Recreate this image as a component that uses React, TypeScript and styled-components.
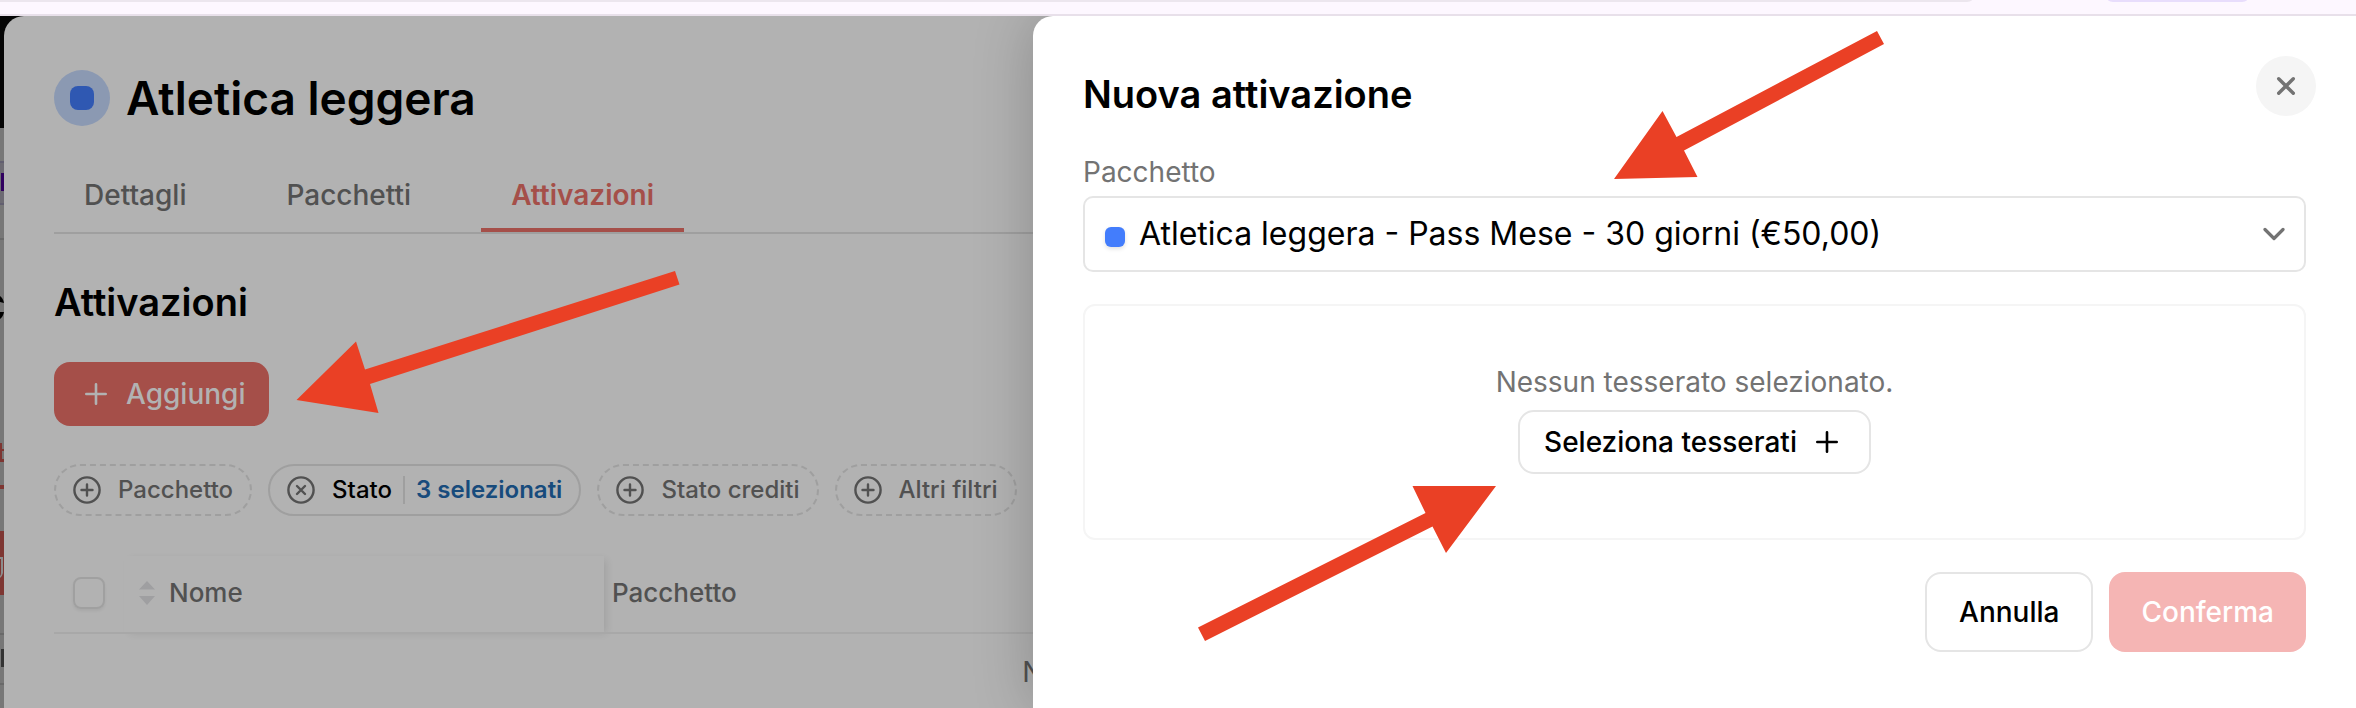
import React from 'react';
import styled, { createGlobalStyle, css } from 'styled-components';

const GlobalStyle = createGlobalStyle`
  *, *::before, *::after { box-sizing: border-box; }
  body { margin: 0; font-family: Inter, "Liberation Sans", sans-serif; color: #000; }
  button, select, input { font: inherit; margin: 0; }
`;

const Page = styled.div`
  min-height: 100vh;
  display: flex;
  flex-direction: column;
  overflow: hidden;
  position: relative;
`;

const BrowserBar = styled.div`
  height: 16px;
  flex: none;
  display: flex;
  gap: 136px;
  background: #fdf7ff;
  border-bottom: 2px solid #e8e0ea;
  position: relative;
  z-index: 2;
`;

const AddressEdge = styled.div`
  flex: 1;
  height: 2px;
  background: #ece6ee;
  border-bottom-right-radius: 8px 2px;
`;

const ChipEdge = styled.div`
  width: 139px;
  height: 2px;
  margin-right: 109px;
  background: #e8ddfc;
  border-radius: 0 0 8px 8px / 0 0 2px 2px;
`;

const Stage = styled.div`
  flex: 1;
  display: grid;
  grid-template-columns: 4px minmax(0, 1fr) min(1323px, 57%);
  background: linear-gradient(#050505 0 112px, #777 112px);
`;

const Backdrop = styled.svg`
  grid-column: 1;
  grid-row: 1;
  width: 4px;
  height: 692px;
`;

const Panel = styled.main`
  grid-column: 2 / -1;
  grid-row: 1;
  min-width: 0;
  padding: 54px 50px 0;
  background: #b2b2b2;
  border-top-left-radius: 20px;
`;

const TitleRow = styled.div`
  display: flex;
  align-items: center;
  gap: 16px;
`;

const Badge = styled.span`
  width: 56px;
  height: 56px;
  border-radius: 50%;
  background: #8b99b2;
  display: grid;
  place-items: center;

  &::before {
    content: "";
    width: 24px;
    height: 24px;
    border-radius: 8px;
    background: #2f58b2;
  }
`;

const Title = styled.h1`
  margin: 0;
  font-size: 46px;
  line-height: 56px;
  font-weight: 600;
`;

const Tabs = styled.nav`
  display: flex;
  gap: 40px;
  margin-top: 28px;
  border-bottom: 2px solid #9f9f9f;
`;

const Tab = styled.a<{ $active?: boolean }>`
  padding: 23px 30px 19px;
  font-size: 28px;
  line-height: 36px;
  font-weight: 500;
  text-decoration: none;
  color: #515151;
  ${(p) =>
    p.$active &&
    css`
      color: #a54f49;
      font-weight: 600;
      padding-bottom: 15px;
      border-bottom: 4px solid #a54f49;
    `}
`;

const Heading = styled.h2`
  margin: 0;
  font-size: 38px;
  line-height: 48px;
  font-weight: 600;
`;

const SectionHeading = styled(Heading)`
  margin-top: 44px;
`;

const Button = styled.button<{ $tone?: 'dim' | 'soft'; $tall?: boolean }>`
  display: inline-flex;
  align-items: center;
  gap: 12px;
  height: ${(p) => (p.$tall ? 80 : 64)}px;
  padding: 0 ${(p) => (p.$tall ? 32 : 24)}px;
  border: 2px solid #e5e5e5;
  border-radius: 16px;
  background: #fff;
  color: #000;
  font-size: 28px;
  line-height: 36px;
  font-weight: 500;
  ${(p) =>
    p.$tone === 'dim' &&
    css`
      background: #a54f49;
      border: 0;
      color: #b2b2b2;
    `}
  ${(p) =>
    p.$tone === 'soft' &&
    css`
      background: #f5b5b4;
      border: 0;
      color: #fff;
    `}
`;

const AddRow = styled.div`
  display: flex;
  margin-top: 36px;
`;

const Filters = styled.div`
  display: flex;
  gap: 16px;
  margin-top: 38px;
`;

const Pill = styled.button<{ $on?: boolean }>`
  display: inline-flex;
  align-items: center;
  flex: none;
  gap: 17px;
  height: 52px;
  padding: 0 17px;
  border: 2px ${(p) => (p.$on ? 'solid' : 'dashed')} #9f9f9f;
  border-radius: 26px;
  background: transparent;
  color: ${(p) => (p.$on ? '#000' : '#515151')};
  font-size: 24px;
  line-height: 32px;
  font-weight: 500;
  white-space: nowrap;

  svg { color: #515151; }
`;

const PillLabel = styled.span`
  display: flex;
  align-items: center;
  gap: 11px;
`;

const PillRule = styled.span`
  width: 2px;
  height: 28px;
  background: #9f9f9f;
`;

const PillValue = styled.span`
  color: #174b7c;
  font-weight: 600;
`;

const Table = styled.table`
  width: 100%;
  margin-top: 40px;
  border-collapse: collapse;
  table-layout: fixed;
`;

const HeadCell = styled.th<{ $w?: number; $sticky?: boolean }>`
  height: 77px;
  width: ${(p) => (p.$w ? `${p.$w}px` : 'auto')};
  padding: 0 8px 3px;
  text-align: left;
  font-size: 26px;
  line-height: 32px;
  font-weight: 500;
  color: #515151;
  border-bottom: 2px solid #a8a8a8;
  box-shadow: ${(p) => (p.$sticky ? '4px 2px 8px -2px rgba(0, 0, 0, 0.1)' : 'none')};
`;

const CheckCell = styled(HeadCell)`
  padding: 0 19px 3px;
`;

const Check = styled.input`
  appearance: none;
  display: block;
  width: 32px;
  height: 32px;
  border: 2px solid #a0a0a0;
  border-radius: 8px;
  box-shadow: 0 2px 3px rgba(0, 0, 0, 0.06);
`;

const Sortable = styled.span`
  display: flex;
  align-items: center;
  gap: 14px;
  padding-left: 7px;
`;

const EmptyCell = styled.td`
  height: 76px;
  text-align: center;
  font-size: 28px;
  line-height: 36px;
  color: #515151;
`;

const Drawer = styled.aside`
  grid-column: 3;
  grid-row: 1;
  position: relative;
  z-index: 1;
  padding: 40px 50px 56px;
  background: #fff;
  border-top-left-radius: 20px;
  box-shadow: 0 0 60px rgba(0, 0, 0, 0.22);
`;

const DrawerHead = styled.header`
  display: flex;
  justify-content: space-between;
  align-items: flex-start;
  margin-right: -10px;

  h2 { padding-top: 14px; }
`;

const Close = styled.button`
  width: 60px;
  height: 60px;
  padding: 0;
  border: 0;
  border-radius: 50%;
  background: #f5f5f5;
  color: #737373;
  display: grid;
  place-items: center;
`;

const Label = styled.label`
  display: block;
  margin-top: 36px;
  padding: 0 0 6px;
  font-size: 28px;
  line-height: 36px;
  color: #737373;
`;

const SelectBox = styled.div`
  display: grid;
  align-items: center;
  grid-template-columns: 56px 1fr 64px;

  > * { grid-row: 1; }
  svg { grid-column: 3; justify-self: center; color: #737373; pointer-events: none; z-index: 1; }
`;

const Swatch = styled.span`
  grid-column: 1;
  width: 20px;
  height: 20px;
  margin: 6px 0 0 22px;
  border-radius: 6px;
  background: #437dfc;
  box-shadow: 0 2px 4px rgba(0, 0, 0, 0.12);
  z-index: 1;
`;

const Select = styled.select`
  grid-column: 1 / -1;
  appearance: none;
  width: 100%;
  height: 76px;
  padding: 0 60px 0 54px;
  border: 2px solid #e5e5e5;
  border-radius: 10px;
  background: #fff;
  color: #000;
  font-size: 32px;
  line-height: 40px;
`;

const Empty = styled.section`
  display: flex;
  flex-direction: column;
  align-items: center;
  margin-top: 32px;
  padding: 58px 24px 64px;
  border: 2px solid #f5f5f5;
  border-radius: 12px;
`;

const EmptyText = styled.p`
  margin: 0 0 10px;
  font-size: 28px;
  line-height: 36px;
  color: #737373;
`;

const Actions = styled.footer`
  display: flex;
  justify-content: flex-end;
  gap: 16px;
  margin-top: 32px;
`;

const Annotations = styled.svg`
  position: absolute;
  top: 0;
  left: 0;
  z-index: 3;
  pointer-events: none;
`;

const Plus = () => (
  <svg width="36" height="36" viewBox="0 0 36 36" fill="none" stroke="currentColor" strokeWidth="2.6" strokeLinecap="round" aria-hidden="true">
    <path d="M18 8.300v19.400M8.300 18h19.400" />
  </svg>
);

const CircleMark = ({ cross }: { cross?: boolean }) => (
  <svg width="28" height="28" viewBox="0 0 28 28" fill="none" stroke="currentColor" strokeWidth="2.4" strokeLinecap="round" aria-hidden="true">
    <circle cx="14" cy="14" r="12.6" />
    <path d={cross ? 'M10 10l8 8M18 10l-8 8' : 'M14 8.5v11M8.5 14h11'} />
  </svg>
);

const SortIcon = () => (
  <svg width="16" height="24" viewBox="0 0 16 24" fill="#9f9fa1" aria-hidden="true">
    <path d="M8 0l8 8.5H0zM8 24l8-9H0z" />
  </svg>
);

export default function App() {
  return (
    <Page>
      <GlobalStyle />
      <BrowserBar>
        <AddressEdge />
        <ChipEdge />
      </BrowserBar>
      <Stage>
        <Backdrop viewBox="0 0 4 692" aria-hidden="true">
          <path fill="#625f70" d="M0 145h4v2H0zM0 187h4v2H0z" />
          <path fill="#6d6b73" d="M0 147h4v40H0z" />
          <path fill="#310060" d="M1 157h3v18H1z" />
          <path fill="#696969" d="M0 222h4v2H0zM0 617h4v2H0zM0 667h4v2H0z" />
          <path fill="#000" d="M0 280q3 2 4 7l-4-1zM0 296h4q-1 5-4 7z" />
          <path fill="#7e3632" d="M0 427h2v6h2v2H2v8h2v3H0zM0 469h4v4H0zM0 515h4v64H0z" />
          <path fill="#8c8c8c" d="M0 541h3v16q-1 4-3 5v-2q1-1 1-3v-14H0z" />
          <path fill="#333" d="M1 633h3v18H1z" />
        </Backdrop>
        <Panel>
          <TitleRow>
            <Badge />
            <Title>Atletica leggera</Title>
          </TitleRow>
          <Tabs>
            <Tab href="#dettagli">Dettagli</Tab>
            <Tab href="#pacchetti">Pacchetti</Tab>
            <Tab href="#attivazioni" $active aria-current="page">Attivazioni</Tab>
          </Tabs>
          <SectionHeading>Attivazioni</SectionHeading>
          <AddRow>
            <Button type="button" $tone="dim">
              <Plus />
              Aggiungi
            </Button>
          </AddRow>
          <Filters>
            <Pill type="button"><CircleMark />Pacchetto</Pill>
            <Pill type="button" $on>
              <CircleMark cross />
              <PillLabel>
                Stato
                <PillRule />
                <PillValue>3 selezionati</PillValue>
              </PillLabel>
            </Pill>
            <Pill type="button"><CircleMark />Stato crediti</Pill>
            <Pill type="button"><CircleMark />Altri filtri</Pill>
          </Filters>
          <Table>
            <thead>
              <tr>
                <CheckCell $w={70}><Check type="checkbox" aria-label="Seleziona tutti" /></CheckCell>
                <HeadCell $w={480} $sticky><Sortable><SortIcon />Nome</Sortable></HeadCell>
                <HeadCell>Pacchetto</HeadCell>
              </tr>
            </thead>
            <tbody>
              <tr><EmptyCell colSpan={3}>Nessun risultato trovato</EmptyCell></tr>
            </tbody>
          </Table>
        </Panel>
        <Drawer aria-label="Nuova attivazione">
          <DrawerHead>
            <Heading>Nuova attivazione</Heading>
            <Close type="button" aria-label="Chiudi">
              <svg width="20" height="20" viewBox="0 0 20 20" fill="none" stroke="currentColor" strokeWidth="3.4" strokeLinecap="round" aria-hidden="true">
                <path d="M2.7 2.7l14.6 14.6M17.3 2.7L2.7 17.3" />
              </svg>
            </Close>
          </DrawerHead>
          <Label htmlFor="pacchetto">Pacchetto</Label>
          <SelectBox>
            <Select id="pacchetto">
              <option>Atletica leggera - Pass Mese - 30 giorni (€50,00)</option>
            </Select>
            <Swatch />
            <svg width="22" height="14" viewBox="0 0 22 14" fill="none" stroke="currentColor" strokeWidth="3.200" strokeLinecap="round" strokeLinejoin="round" aria-hidden="true">
              <path d="M2 2.5l9 9 9-9" />
            </svg>
          </SelectBox>
          <Empty>
            <EmptyText>Nessun tesserato selezionato.</EmptyText>
            <Button type="button">
              Seleziona tesserati
              <Plus />
            </Button>
          </Empty>
          <Actions>
            <Button type="button" $tall>Annulla</Button>
            <Button type="button" $tall $tone="soft">Conferma</Button>
          </Actions>
        </Drawer>
      </Stage>
      <Annotations width="2356" height="708" viewBox="0 0 2356 708" fill="#ea4025" aria-hidden="true">
        <path d="M296.5 400L356 341.5l9 28L675 271l4.500 13.500L370 384l8.500 29z" />
        <path d="M1614 179l48.500-68 14 26L1877 31l7 13-200 106.500 13.500 26.500z" />
        <path d="M1496 486h-83.500l13 27L1198 627.500l7 13.500 227.500-114.500L1446 553z" />
      </Annotations>
    </Page>
  );
}
